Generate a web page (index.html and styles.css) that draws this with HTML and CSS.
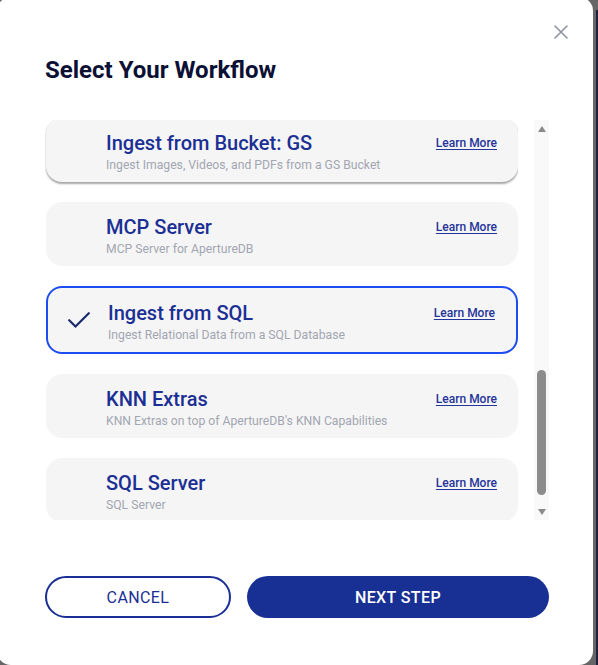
FILE: index.html
```html
<!DOCTYPE html>
<html lang="en">
<head>
<meta charset="utf-8">
<title>Select Your Workflow</title>
<link rel="stylesheet" href="styles.css">
</head>
<body>
<div class="modal">
  <div class="close-row">
    <button class="close" aria-label="Close">
      <svg width="14" height="14" viewBox="0 0 14 14"><path d="M1 1 L13 13 M13 1 L1 13" stroke="#8e939c" stroke-width="1.6" stroke-linecap="round" fill="none"/></svg>
    </button>
  </div>
  <h1 class="title">Select Your Workflow</h1>

  <div class="list-row">
    <div class="list">
      <div class="card hover">
        <div class="icon-slot"></div>
        <div class="text">
          <div class="card-title">Ingest from Bucket: GS</div>
          <div class="card-sub">Ingest Images, Videos, and PDFs from a GS Bucket</div>
        </div>
        <a class="learn" href="#">Learn More</a>
      </div>
      <div class="card">
        <div class="icon-slot"></div>
        <div class="text">
          <div class="card-title">MCP Server</div>
          <div class="card-sub">MCP Server for ApertureDB</div>
        </div>
        <a class="learn" href="#">Learn More</a>
      </div>
      <div class="card selected">
        <div class="icon-slot">
          <svg class="check" width="22" height="16" viewBox="0 0 22 16"><polyline points="1.2,8.2 7.5,14.6 20.8,1.2" fill="none" stroke="#1b2a6b" stroke-width="2.2" stroke-linecap="round" stroke-linejoin="round"/></svg>
        </div>
        <div class="text">
          <div class="card-title">Ingest from SQL</div>
          <div class="card-sub">Ingest Relational Data from a SQL Database</div>
        </div>
        <a class="learn" href="#">Learn More</a>
      </div>
      <div class="card">
        <div class="icon-slot"></div>
        <div class="text">
          <div class="card-title">KNN Extras</div>
          <div class="card-sub">KNN Extras on top of ApertureDB's KNN Capabilities</div>
        </div>
        <a class="learn" href="#">Learn More</a>
      </div>
      <div class="card">
        <div class="icon-slot"></div>
        <div class="text">
          <div class="card-title">SQL Server</div>
          <div class="card-sub">SQL Server</div>
        </div>
        <a class="learn" href="#">Learn More</a>
      </div>
    </div>
    <div class="scrollbar">
      <div class="arrow up"></div>
      <div class="trough"><div class="thumb"></div></div>
      <div class="arrow down"></div>
    </div>
  </div>

  <div class="actions">
    <button class="btn cancel">CANCEL</button>
    <button class="btn next">NEXT STEP</button>
  </div>
</div>
</body>
</html>
```

FILE: styles.css
```css
* { box-sizing: border-box; }

html, body {
  margin: 0;
  padding: 0;
  height: 100%;
  overflow: hidden;
}

body {
  background:
    linear-gradient(#1c2240, #1c2240) right 0 top 10px / 2px 100% no-repeat,
    #666666;
  font-family: Roboto, "Noto Sans", Arial, sans-serif;
}

.modal {
  margin: -3px 0 0 -3px;
  width: 596px;
  height: 668px;
  background: #ffffff;
  border-radius: 14px;
  padding: 28px 25px 0 48px;
  display: flex;
  flex-direction: column;
}

.close-row {
  display: flex;
  justify-content: flex-end;
  height: 14px;
}

.close {
  border: 0;
  background: none;
  padding: 0;
  width: 14px;
  height: 14px;
  display: block;
  cursor: pointer;
}
.close svg { display: block; }

.title {
  margin: 17px 0 0 0;
  font-size: 24px;
  line-height: 28px;
  font-weight: 700;
  color: #0b1035;
  letter-spacing: 0;
}

.list-row {
  margin-top: 36px;
  height: 400px;
  display: flex;
  gap: 16px;
}

.list {
  width: 473px;
  height: 400px;
  overflow: hidden;
  padding-left: 1px;
  display: flex;
  flex-direction: column;
  gap: 20px;
}

.card {
  flex: 0 0 auto;
  width: 472px;
  height: 64px;
  background: #f5f5f5;
  border-radius: 16px;
  display: flex;
  padding: 13px 21px 0 0;
}

.card.hover {
  margin-top: -2px;
  box-shadow: 0 1.5px 2px rgba(0, 0, 0, 0.35);
}

.card.selected {
  height: 68px;
  border: 2px solid #1d4cf0;
}

.icon-slot {
  flex: 0 0 60px;
  display: flex;
  align-items: center;
  padding-left: 20px;
  margin-top: -13px;
}

.check { display: block; }

.text {
  flex: 1;
  min-width: 0;
}

.card-title {
  font-size: 20px;
  line-height: 24px;
  font-weight: 500;
  color: #1b2f94;
}

.card-sub {
  margin-top: 2px;
  font-size: 12.2px;
  line-height: 16px;
  color: #a3a6b2;
}

.learn {
  align-self: flex-start;
  margin-top: 4px;
  font-size: 12px;
  line-height: 16px;
  font-weight: 500;
  color: #24349a;
  text-decoration: underline;
  text-decoration-thickness: 1px;
  text-underline-offset: 2px;
}

.scrollbar {
  width: 15px;
  height: 400px;
  background: #f9f9f9;
  display: flex;
  flex-direction: column;
  align-items: center;
}

.arrow {
  flex: 0 0 16px;
  width: 15px;
  display: flex;
  align-items: center;
  justify-content: center;
}
.arrow::before {
  content: "";
  width: 0;
  height: 0;
  border-left: 4.5px solid transparent;
  border-right: 4.5px solid transparent;
}
.arrow.up::before { border-bottom: 6px solid #8a8a8a; margin-top: 1px; }
.arrow.down::before { border-top: 6px solid #8a8a8a; }

.trough {
  flex: 1;
  width: 15px;
  display: flex;
  justify-content: center;
}

.thumb {
  width: 9px;
  height: 125px;
  margin-top: 234px;
  background: #8c8c8c;
  border-radius: 4.5px;
}

.actions {
  margin-top: 56px;
  display: flex;
  gap: 16px;
  width: 504px;
}

.btn {
  height: 42px;
  border-radius: 21px;
  font-family: Roboto, "Noto Sans", Arial, sans-serif;
  font-size: 16px;
  letter-spacing: 0.4px;
  cursor: pointer;
}

.cancel {
  flex: 0 0 186px;
  background: #ffffff;
  border: 2px solid #1a2e96;
  color: #1a2e96;
  font-weight: 400;
}

.next {
  flex: 1;
  background: #182f93;
  border: 0;
  color: #ffffff;
  font-weight: 500;
}
```
